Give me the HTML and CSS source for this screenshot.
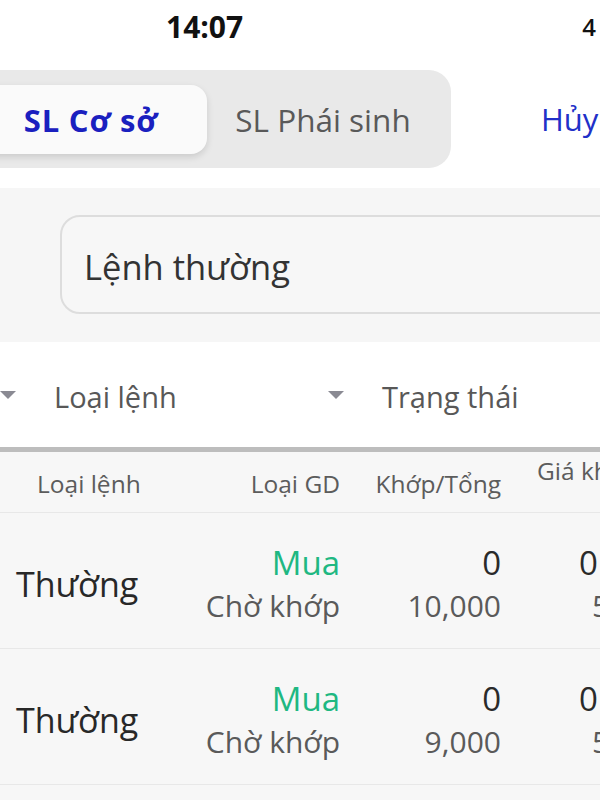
FILE: index.html
```html
<!DOCTYPE html>
<html lang="vi">
<head>
    <meta charset="UTF-8">
    <meta name="viewport" content="width=device-width, initial-scale=1.0">
    <title>Sổ lệnh</title>
    <link rel="stylesheet" href="styles.css">
</head>
<body>
    <div class="screen">
        <div class="status-bar">
            <span class="clock">14:07</span>
            <span class="signal">4</span>
        </div>

        <div class="toolbar">
            <div class="segmented">
                <div class="segment active">SL Cơ sở</div>
                <div class="segment">SL Phái sinh</div>
            </div>
            <div class="cancel">Hủy</div>
        </div>

        <div class="search-area">
            <div class="order-type">Lệnh thường</div>
        </div>

        <div class="filters">
            <div class="filter"><span class="caret"></span><span>Loại lệnh</span></div>
            <div class="filter"><span class="caret"></span><span>Trạng thái</span></div>
        </div>

        <div class="orders">
            <div class="order-row head">
                <div class="cell first">Loại lệnh</div>
                <div class="cell">Loại GD</div>
                <div class="cell">Khớp/Tổng</div>
                <div class="cell price">Giá khớp</div>
            </div>

            <div class="order-row">
                <div class="cell first kind">Thường</div>
                <div class="cell">
                    <div class="top buy">Mua</div>
                    <div class="bottom">Chờ khớp</div>
                </div>
                <div class="cell">
                    <div class="top">0</div>
                    <div class="bottom">10,000</div>
                </div>
                <div class="cell price">
                    <div class="top">0</div>
                    <div class="bottom">5.6</div>
                </div>
            </div>

            <div class="order-row">
                <div class="cell first kind">Thường</div>
                <div class="cell">
                    <div class="top buy">Mua</div>
                    <div class="bottom">Chờ khớp</div>
                </div>
                <div class="cell">
                    <div class="top">0</div>
                    <div class="bottom">9,000</div>
                </div>
                <div class="cell price">
                    <div class="top">0</div>
                    <div class="bottom">5.6</div>
                </div>
            </div>

            <div class="order-row">
                <div class="cell first kind">Thường</div>
                <div class="cell">
                    <div class="top buy">Mua</div>
                    <div class="bottom">Chờ khớp</div>
                </div>
                <div class="cell">
                    <div class="top">0</div>
                    <div class="bottom">5,000</div>
                </div>
                <div class="cell price">
                    <div class="top">0</div>
                    <div class="bottom">5.5</div>
                </div>
            </div>
        </div>
    </div>
</body>
</html>
```

FILE: styles.css
```css
html, body {
    margin: 0;
    padding: 0;
    overflow: hidden;
    background: #fff;
}

body {
    font-family: 'Open Sans', 'Noto Sans', sans-serif;
    color: #333;
}

.screen {
    width: 600px;
    height: 800px;
    overflow: hidden;
    background: #f7f7f7;
}

/* status bar */
.status-bar {
    height: 60px;
    display: flex;
    align-items: center;
    padding-left: 166px;
    padding-bottom: 8px;
    box-sizing: border-box;
    background: #fff;
    white-space: nowrap;
}

.clock {
    font-size: 30px;
    font-weight: bold;
    color: #111;
}

.signal {
    margin-left: 339px;
    font-size: 24px;
    font-weight: 600;
    color: #111;
}

/* top segmented tabs */
.toolbar {
    display: flex;
    align-items: center;
    padding-top: 10px;
    padding-bottom: 20px;
    background: #fff;
    white-space: nowrap;
}

.segmented {
    display: flex;
    margin-left: -33px;
    padding: 15px 12px 14px 8px;
    background: #e9e9e9;
    border-radius: 0 22px 22px 0;
}

.segment {
    width: 232px;
    height: 69px;
    display: flex;
    align-items: center;
    justify-content: center;
    font-size: 31.5px;
    color: #595959;
    border-radius: 16px;
}

.segment.active {
    background: #fafafa;
    color: #1a20bf;
    font-weight: bold;
    font-size: 31px;
    letter-spacing: 0.8px;
    box-shadow: 0 3px 7px rgba(0, 0, 0, 0.13);
}

.cancel {
    margin-left: 90px;
    font-size: 31px;
    color: #2130c8;
}

/* order type box */
.search-area {
    padding: 27px 0 28px 60px;
    background: #f6f6f6;
}

.order-type {
    width: 600px;
    height: 99px;
    box-sizing: border-box;
    display: flex;
    align-items: center;
    padding-left: 22px;
    padding-top: 4px;
    border: 2px solid #dddddd;
    border-radius: 20px;
    background: #f7f7f7;
    font-size: 34.5px;
    color: #333;
}

/* filters */
.filters {
    height: 110px;
    display: flex;
    align-items: center;
    padding-top: 4px;
    box-sizing: border-box;
    background: #fff;
    border-bottom: 5px solid #bdbdbd;
}

.filter {
    width: 328px;
    flex-shrink: 0;
    display: flex;
    align-items: center;
    gap: 38px;
    font-size: 29px;
    color: #585858;
    white-space: nowrap;
}

.caret {
    width: 0;
    height: 0;
    border-left: 8px solid transparent;
    border-right: 8px solid transparent;
    border-top: 8px solid #8a8a93;
    margin-top: -4px;
}

/* order table */
.orders {
    background: #f7f7f7;
}

.order-row {
    display: grid;
    grid-template-columns: 158px 182px 161px 140px;
    height: 135px;
    align-items: center;
    border-bottom: 1px solid #e8e8e8;
    white-space: nowrap;
}

.order-row.head {
    height: 60px;
    font-size: 24.5px;
    color: #5c5c5c;
}

.cell {
    text-align: right;
}

.cell.first {
    text-align: left;
    padding-left: 16px;
}

.cell.price {
    text-align: left;
    padding-left: 78px;
}

.cell.price .bottom {
    padding-left: 13px;
}

.head .cell.first {
    padding-left: 37px;
}

.head .cell {
    padding-top: 2px;
}

.head .cell.price {
    padding-left: 36px;
    padding-top: 0;
    margin-top: -24px;
}

.kind {
    font-size: 34px;
    color: #282828;
    padding-top: 6px;
}

.top {
    font-size: 33px;
    line-height: 42px;
    color: #2a2a2a;
    padding-top: 8px;
}

.top.buy {
    color: #1fb882;
}

.bottom {
    font-size: 30px;
    line-height: 44px;
    color: #5a5a5a;
}
```
